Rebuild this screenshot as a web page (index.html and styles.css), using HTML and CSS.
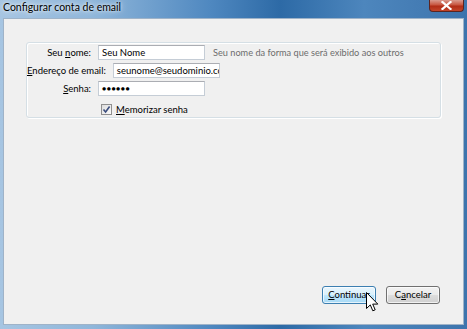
FILE: index.html
```html
<!DOCTYPE html>
<html lang="pt">
<head>
<meta charset="utf-8">
<title>Configurar conta de email</title>
<link rel="stylesheet" href="styles.css">
</head>
<body>
<div class="window">
  <div class="titlebar">
    <span class="title">Configurar conta de email</span>
    <div class="close">
      <svg width="11" height="9" viewBox="0 0 11 9"><path d="M1.5 1 L9.5 8 M9.5 1 L1.5 8" stroke="#fff" stroke-width="2.2" stroke-linecap="square"/></svg>
    </div>
  </div>
  <div class="client">
    <div class="group">
      <div class="row">
        <label class="lbl">Seu <u>n</u>ome:</label>
        <div class="input">Seu Nome</div>
        <span class="hint">Seu nome da forma que será exibido aos outros</span>
      </div>
      <div class="row">
        <label class="lbl"><u>E</u>ndereço de email:</label>
        <div class="input clip">seunome@seudominio.cc</div>
      </div>
      <div class="row">
        <label class="lbl"><u>S</u>enha:</label>
        <div class="input pw">●●●●●●</div>
      </div>
      <div class="row check-row">
        <span class="checkbox">
          <svg width="9" height="9" viewBox="0 0 9 9"><path d="M1.5 4.5 L3.6 7 L7.6 1.5" fill="none" stroke="#3b4e7e" stroke-width="1.6"/></svg>
        </span>
        <span class="check-lbl"><u>M</u>emorizar senha</span>
      </div>
    </div>
    <div class="spacer"></div>
    <div class="buttons">
      <button class="btn primary"><u>C</u>ontinuar</button>
      <button class="btn">C<u>a</u>ncelar</button>
    </div>
  </div>
  <svg class="cursor" width="13" height="21" viewBox="0 0 13 21"><path d="M0.5 0.5 L0.5 16.5 L4.3 12.9 L6.8 18.8 L9.2 17.8 L6.7 12.1 L11.8 12.1 Z" fill="#fff" stroke="#000" stroke-width="1" stroke-linejoin="miter"/></svg>
</div>
</body>
</html>
```
FILE: styles.css
```css
* { box-sizing: border-box; }
html, body { margin: 0; padding: 0; }
body {
  width: 467px;
  height: 329px;
  overflow: hidden;
  font-family: "Lato", "Open Sans", sans-serif;
  font-size: 9.5px;
  color: #000;
}
.window {
  position: relative;
  width: 467px;
  height: 329px;
  display: flex;
  flex-direction: column;
  background: linear-gradient(90deg, #a6c5e2 0%, #8fb6da 20%, #4f88c0 45%, #2d6aa6 60%, #4d86bd 78%, #3d74ad 100%);
}
.titlebar {
  height: 18px;
  display: flex;
  align-items: flex-start;
  justify-content: space-between;
  padding-left: 3px;
}
.title {
  font-size: 10.5px;
  line-height: 14px;
  color: #000;
  text-shadow: 0 0 6px rgba(255,255,255,0.9), 0 0 3px rgba(255,255,255,0.8);
}
.close {
  width: 35px;
  height: 12px;
  margin-right: 3px;
  border: 1px solid #5b2420;
  border-top: none;
  border-radius: 0 0 4px 4px;
  background: linear-gradient(180deg, #d99a8e 0%, #c8553f 45%, #b12c16 55%, #c2452a 100%);
  display: flex;
  align-items: center;
  justify-content: center;
}
.client {
  flex: 1;
  margin: 0 3px 4px 3px;
  background: #f0f0f0;
  border: 1px solid #9fb3c8;
  display: flex;
  flex-direction: column;
}
.group {
  margin: 23px 0 0 22px;
  width: 415px;
  height: 76px;
  border: 1px solid #d5dfe5;
  box-shadow: inset 1px 1px 0 #fff, 1px 1px 0 #fff;
  border-radius: 3px;
  padding: 2px 0 0 0;
  display: flex;
  flex-direction: column;
  gap: 3px;
}
.row {
  display: flex;
  align-items: center;
  height: 15px;
}
.lbl {
  min-width: 64px;
  text-align: right;
  white-space: nowrap;
  margin-right: 7px;
}
.input {
  width: 107px;
  height: 15px;
  background: #fff;
  border: 1px solid #c5cdd6;
  border-top-color: #abadb3;
  padding: 0 0 0 3px;
  line-height: 13px;
  white-space: nowrap;
  overflow: hidden;
}
.input.pw {
  font-size: 7px;
  letter-spacing: 0.5px;
  line-height: 13px;
}
.hint {
  margin-left: 8px;
  color: #6d6d6d;
  font-size: 9.2px;
  white-space: nowrap;
}
.check-row {
  margin-top: 3px;
  padding-left: 74px;
}
.checkbox {
  width: 11px;
  height: 11px;
  border: 1px solid #8f8f8f;
  background: linear-gradient(135deg, #dcdcdc, #fbfbfb);
  display: flex;
  align-items: center;
  justify-content: center;
  margin-right: 4px;
}
.spacer { flex: 1; }
.buttons {
  display: flex;
  justify-content: flex-end;
  gap: 10px;
  padding: 0 23px 20px 0;
}
.btn {
  width: 54px;
  height: 18px;
  padding: 0;
  font-family: inherit;
  font-size: 9.5px;
  line-height: 14px;
  color: #000;
  border: 1px solid #707070;
  border-radius: 3px;
  background: linear-gradient(180deg, #f2f2f2 0%, #ebebeb 48%, #dddddd 52%, #cfcfcf 100%);
  box-shadow: inset 0 0 0 1px rgba(255,255,255,0.7);
}
.btn.primary {
  border-color: #3c7fb1;
  background: linear-gradient(180deg, #eaf6fd 0%, #d9f0fc 48%, #bee6fd 52%, #a7d9f5 100%);
}
.cursor {
  position: absolute;
  left: 366px;
  top: 292px;
}
```
